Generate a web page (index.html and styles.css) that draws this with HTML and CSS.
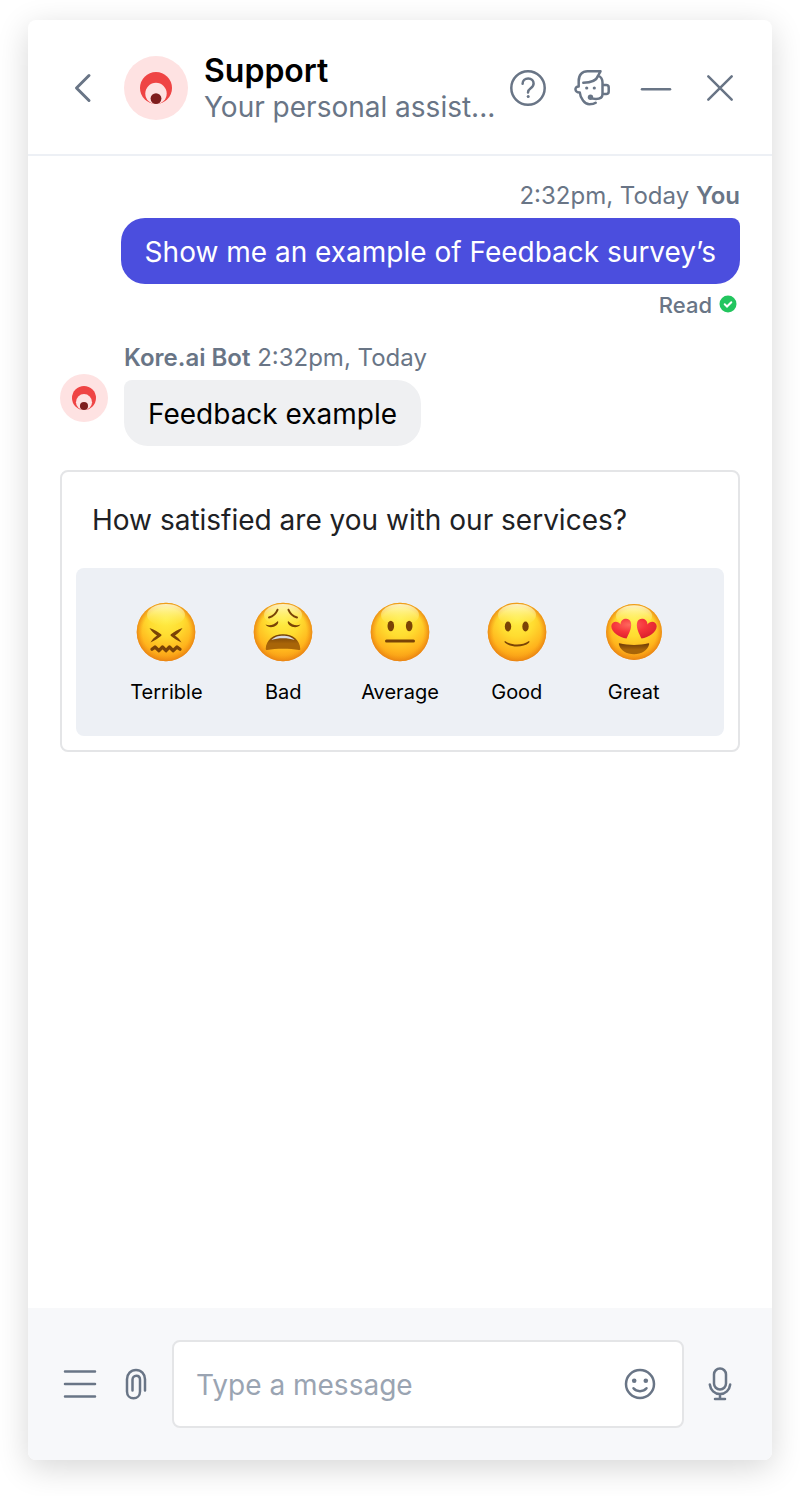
FILE: index.html
```html
<!DOCTYPE html>
<html lang="en">
<head>
<meta charset="utf-8">
<meta name="viewport" content="width=device-width, initial-scale=1">
<title>Support chat</title>
<link rel="stylesheet" href="styles.css">
</head>
<body>
<svg class="defs" width="0" height="0" aria-hidden="true">
  <defs>
    <radialGradient id="face" cx="50%" cy="28%" r="74%">
      <stop offset="0" stop-color="#ffee45"/>
      <stop offset=".4" stop-color="#ffdc30"/>
      <stop offset=".75" stop-color="#ffb31c"/>
      <stop offset="1" stop-color="#f38f12"/>
    </radialGradient>
    <radialGradient id="rim" cx="50%" cy="50%" r="50%">
      <stop offset=".8" stop-color="#f59a12" stop-opacity="0"/>
      <stop offset="1" stop-color="#e67f14" stop-opacity=".8"/>
    </radialGradient>
    <linearGradient id="shine" x1="0" y1="0" x2="0" y2="1">
      <stop offset="0" stop-color="#fffde0" stop-opacity=".85"/>
      <stop offset="1" stop-color="#fff36a" stop-opacity="0"/>
    </linearGradient>
    <linearGradient id="mouth" x1="0" y1="0" x2="0" y2="1">
      <stop offset="0" stop-color="#6b3a08"/>
      <stop offset=".6" stop-color="#a86508"/>
      <stop offset="1" stop-color="#a86508"/>
    </linearGradient>
    <radialGradient id="heart" cx="40%" cy="30%" r="75%">
      <stop offset="0" stop-color="#ff6a5e"/>
      <stop offset=".5" stop-color="#f5333a"/>
      <stop offset="1" stop-color="#d81e2c"/>
    </radialGradient>
    <symbol id="head" viewBox="0 0 64 64">
      <circle cx="32" cy="32" r="29.3" fill="url(#face)"/>
      <circle cx="32" cy="32" r="29.3" fill="url(#rim)"/>
      <ellipse cx="32" cy="15" rx="19" ry="11" fill="url(#shine)"/>
    </symbol>
    <symbol id="logo" viewBox="0 0 64 64">
      <circle cx="32" cy="32" r="32" fill="#fee2e2"/>
      <circle cx="32" cy="32" r="16" fill="#ef4444"/>
      <circle cx="32" cy="37.5" r="10.7" fill="#fee2e2"/>
      <circle cx="32" cy="42.6" r="5.4" fill="#7f1d1d"/>
    </symbol>
  </defs>
</svg>

<main class="chat">
  <header class="chat-header">
    <button class="icon-button back" type="button" aria-label="Back">
      <svg width="48" height="40" viewBox="0 0 48 40"><path d="M29 7.500 16.500 20 29 32.500"/></svg>
    </button>
    <svg class="avatar" aria-hidden="true"><use href="#logo"/></svg>
    <div class="heading">
      <h1>Support</h1>
      <p>Your personal assist...</p>
    </div>
    <div class="header-actions">
      <button class="icon-button" type="button" aria-label="Help">
        <svg width="40" height="40" viewBox="0 0 40 40"><circle cx="20" cy="20" r="16.700"/><path d="M14.600 15.800c0-3.100 2.400-5.300 5.600-5.300s5.400 2.100 5.400 5c0 2.300-1.200 3.500-2.900 4.700-1.900 1.300-2.700 2.100-2.700 4.400"/><circle class="solid" cx="20.200" cy="28.600" r="1.500"/></svg>
      </button>
      <button class="icon-button" type="button" aria-label="Talk to an agent">
        <svg width="40" height="40" viewBox="-2 -2 40 40"><path d="M4.700 16.500V11C4.700 4.800 8 1.300 13.500 1.300h13l-2.300 4.200c3 1.500 4.300 4 4.300 7V24c0 3.500-3 5-6.500 5-2.600 0-4.300-.5-5.500-1.500M9.300 12.700c7 0 13.200-2.200 14.900-7.200M4.700 16.500C.2 16.500.2 22.500 5.800 22.500c.4 5.500 5 11.800 9.500 11.800 2.700 0 4.700-.2 6.400-1.500M28.700 15h3.500c1.700 0 2.500.8 2.500 2.500v4c0 1.700-.8 2.500-2.500 2.500h-3.500"/><circle class="solid" cx="12.700" cy="18" r="1.600"/><circle class="solid" cx="20.300" cy="18" r="1.600"/><circle class="solid" cx="16.500" cy="27.200" r="2.700"/></svg>
      </button>
      <button class="icon-button" type="button" aria-label="Minimize">
        <svg width="40" height="40" viewBox="0 0 40 40"><path d="M6 21.200h28"/></svg>
      </button>
      <button class="icon-button" type="button" aria-label="Close">
        <svg width="40" height="40" viewBox="0 0 40 40"><path d="m8.300 8.300 23.400 23.400m0-23.400L8.300 31.700"/></svg>
      </button>
    </div>
  </header>

  <section class="messages">
    <article class="message sent">
      <p class="meta">2:32pm, Today <strong>You</strong></p>
      <p class="bubble">Show me an example of Feedback survey’s</p>
      <p class="status">Read
        <svg width="24" height="24" viewBox="0 0 24 24" aria-hidden="true"><circle cx="12" cy="11" r="8.500"/><path d="m8.700 11.300 2.300 2.200 4.300-4.300"/></svg>
      </p>
    </article>

    <article class="message received">
      <svg class="avatar small" aria-hidden="true"><use href="#logo"/></svg>
      <div class="message-body">
        <p class="meta"><strong>Kore.ai Bot</strong> 2:32pm, Today</p>
        <p class="bubble">Feedback example</p>
      </div>
    </article>

    <section class="survey" aria-labelledby="question">
      <h2 id="question">How satisfied are you with our services?</h2>
      <div class="ratings">
        <button class="rating" type="button">
          <svg class="emoji" viewBox="0 0 64 64" aria-hidden="true"><use href="#head"/><g class="feature"><path class="fill" d="M15.500 28c4.500 1.500 8.500 4 11.500 6.300.7.500.7 1.200 0 1.700-3 2.200-6.500 4.700-10.500 6.500 1.600-3 3.900-5.300 6.500-7-2.900-1.700-5.700-4.200-7.500-7.500zM48.500 28c-4.500 1.500-8.500 4-11.500 6.300-.7.500-.7 1.200 0 1.700 3 2.200 6.500 4.700 10.500 6.500-1.600-3-3.900-5.300-6.500-7 2.900-1.700 5.700-4.200 7.500-7.500z"/><path d="m18 49.300 3-2.300 4 3.700 3.500-3.700 3.500 3.700 3.500-3.700 3.500 3.700 4-3.700 3 2.300" stroke-width="3.300"/></g></svg>
          <span>Terrible</span>
        </button>
        <button class="rating" type="button">
          <svg class="emoji" viewBox="0 0 64 64" aria-hidden="true"><use href="#head"/><g class="feature"><path d="M18 17.500c4-1.300 7-4 8.500-7.700M46 17.500c-4-1.300-7-4-8.500-7.700" stroke-width="2"/><path class="fill" d="M14.500 24.500c4 1.700 8.500.5 12.500-3.500 2 4.500-8.500 9.500-12.500 3.500zM49.500 24.500c-4 1.700-8.500.5-12.500-3.500-2 4.500 8.500 9.500 12.500 3.500z"/></g><path fill="url(#mouth)" d="M14.700 49C15 40 22 34.200 32 34.200S49 40 49.300 49c0 .8-.7 1.100-1.400.9-9-1.700-22.800-1.700-31.800 0-.8.200-1.400-.1-1.400-.9z"/><path fill="#d9d9df" d="M20.500 40c4.500-5.800 18.500-5.800 23 0-6-2.200-17-2.200-23 0z"/></svg>
          <span>Bad</span>
        </button>
        <button class="rating" type="button">
          <svg class="emoji" viewBox="0 0 64 64" aria-hidden="true"><use href="#head"/><g class="feature"><ellipse class="fill" cx="22.800" cy="26" rx="3.300" ry="5.200"/><ellipse class="fill" cx="41.200" cy="26" rx="3.300" ry="5.200"/><path d="M18.500 41h27" stroke-width="3"/></g></svg>
          <span>Average</span>
        </button>
        <button class="rating" type="button">
          <svg class="emoji" viewBox="0 0 64 64" aria-hidden="true"><use href="#head"/><g class="feature"><ellipse class="fill" cx="23" cy="26.500" rx="3.200" ry="5"/><ellipse class="fill" cx="40.500" cy="26.500" rx="3.200" ry="5"/><path class="fill" d="M20 41c6.500 4.700 17.500 4.700 24 0 .8.500.4 1.200 0 1.700-5.500 5-18.500 5-24 0-.4-.5-.8-1.200 0-1.700z"/></g></svg>
          <span>Good</span>
        </button>
        <button class="rating" type="button">
          <svg class="emoji" viewBox="0 0 64 64" aria-hidden="true"><use href="#head" x="1.500" y="1.500" width="61" height="61"/><path fill="url(#heart)" d="M24.500 38.600C17.500 37.300 9.300 32.500 9.300 26.300c0-5.300 6.700-6.300 9.200-1.800 0-6.800 9.300-7.800 10.500-1.500 1 5.300-2.500 11.300-4.500 15.600zM39.500 38.600c7-1.300 15.200-6.100 15.200-12.300 0-5.300-6.700-6.300-9.200-1.800 0-6.800-9.300-7.800-10.500-1.500-1 5.300 2.500 11.300 4.500 15.600z"/><path fill="url(#mouth)" d="M17.500 43.200c9 2.300 20 2.300 29 0 .5-.1.800.2.700.8-1.200 6.500-7.700 10.200-15.200 10.200S18 50.500 16.800 44c-.1-.6.200-.9.700-.8z"/></svg>
          <span>Great</span>
        </button>
      </div>
    </section>
  </section>

  <form class="composer">
    <button class="icon-button" type="button" aria-label="Menu">
      <svg width="40" height="40" viewBox="0 0 40 40"><path d="M5 7.500h30M5 20h30M5 32.500h30"/></svg>
    </button>
    <button class="icon-button" type="button" aria-label="Attach a file">
      <svg width="40" height="40" viewBox="0 0 40 40"><path d="M29 26.500V15.300C29 10 25.200 6 20 6s-9 4-9 9.300v12.200c0 4 2.800 6.800 6.500 6.800s6.500-2.800 6.500-6.800V15.800c0-2.300-1.500-4-3.700-4s-3.800 1.700-3.800 4v10.700"/></svg>
    </button>
    <div class="field">
      <input type="text" placeholder="Type a message" aria-label="Message">
      <button class="icon-button" type="button" aria-label="Insert emoji">
        <svg width="40" height="40" viewBox="0 0 40 40"><circle cx="20" cy="20" r="14"/><path d="M13.500 24.300c3 3.800 10 3.800 13 0"/><circle class="solid" cx="14.200" cy="16.700" r="2.300"/><circle class="solid" cx="25.800" cy="16.700" r="2.300"/></svg>
      </button>
    </div>
    <button class="icon-button" type="button" aria-label="Record voice">
      <svg width="40" height="40" viewBox="0 0 40 40"><rect x="14" y="4.500" width="12" height="21" rx="6"/><path d="M9.800 20.500C10.500 26 14.500 30 20 30s9.500-4 10.200-9.500M20 30v5M15 35h10"/></svg>
    </button>
  </form>
</main>
</body>
</html>
```
FILE: styles.css
```css
* {
  box-sizing: border-box;
}

body {
  margin: 0;
  padding: 20px 28px 36px;
  min-height: 100vh;
  display: flex;
  background: #fff;
  color: #000;
  font-family: Inter, "Liberation Sans", sans-serif;
}

h1,
h2,
p {
  margin: 0;
}

button,
input {
  font: inherit;
  color: inherit;
}

.defs {
  position: absolute;
}

.chat {
  flex: 1;
  min-width: 0;
  display: flex;
  flex-direction: column;
  background: #fff;
  border-radius: 8px;
  overflow: hidden;
  box-shadow: 0 8px 32px rgba(0, 0, 0, 0.16);
}

.chat-header {
  display: flex;
  align-items: center;
  gap: 16px;
  padding: 32px 32px 30px;
  border-bottom: 2px solid #edf0f5;
}

.icon-button {
  flex: none;
  display: flex;
  width: 40px;
  height: 40px;
  padding: 0;
  border: 0;
  background: none;
  cursor: pointer;
}

.icon-button svg {
  fill: none;
  stroke: #697586;
  stroke-width: 2.5;
  stroke-linecap: round;
  stroke-linejoin: round;
}

.icon-button .solid {
  fill: #697586;
  stroke: none;
}

.back {
  width: 48px;
}

.back svg {
  stroke-width: 3;
}

.avatar {
  flex: none;
  width: 64px;
  height: 64px;
}

.heading {
  flex: 1;
  min-width: 0;
  white-space: nowrap;
}

.heading h1 {
  font-size: 32px;
  font-weight: 600;
  line-height: 38px;
}

.heading p {
  font-size: 28px;
  line-height: 34px;
  color: #697586;
}

.header-actions {
  display: flex;
  gap: 24px;
}

.messages {
  flex: 1;
  display: flex;
  flex-direction: column;
  gap: 24px;
  padding: 24px 32px;
}

.message {
  display: flex;
}

.sent {
  flex-direction: column;
  align-items: flex-end;
}

.received {
  align-items: flex-start;
  gap: 16px;
}

.message-body {
  display: flex;
  flex-direction: column;
  align-items: flex-start;
}

.avatar.small {
  width: 48px;
  height: 48px;
  margin-top: 32px;
}

.meta {
  margin-bottom: 6px;
  font-size: 24px;
  line-height: 32px;
  color: #697586;
}

.meta strong {
  font-weight: 600;
}

.bubble {
  padding: 17px 24px 15px;
  border-radius: 24px;
  font-size: 28px;
  line-height: 34px;
}

.sent .bubble {
  border-top-right-radius: 8px;
  background: #4b4ede;
  color: #fff;
}

.received .bubble {
  border-top-left-radius: 8px;
  background: #eff0f2;
}

.status {
  display: flex;
  align-items: center;
  gap: 4px;
  margin-top: 8px;
  font-size: 22px;
  font-weight: 500;
  line-height: 26px;
  color: #697586;
}

.status circle {
  fill: #22c55e;
}

.status path {
  fill: none;
  stroke: #fff;
  stroke-width: 2;
  stroke-linecap: round;
}

.survey {
  padding: 0 14px 14px;
  border: 2px solid #e4e5e7;
  border-radius: 8px;
}

.survey h2 {
  padding: 30px 16px;
  font-size: 28px;
  font-weight: 400;
  line-height: 36px;
  color: #202124;
}

.ratings {
  display: grid;
  grid-template-columns: repeat(5, 1fr);
  padding: 32px;
  border-radius: 8px;
  background: #edf0f5;
}

.rating {
  display: flex;
  flex-direction: column;
  align-items: center;
  gap: 16px;
  padding: 0;
  border: 0;
  background: none;
  font-size: 20px;
  line-height: 24px;
  cursor: pointer;
}

.emoji {
  width: 64px;
  height: 64px;
}

.feature {
  fill: none;
  stroke: #7a4306;
  stroke-linecap: round;
  stroke-linejoin: round;
}

.feature .fill {
  fill: #7a4306;
  stroke: none;
}

.composer {
  display: flex;
  align-items: center;
  gap: 16px;
  padding: 32px;
  background: #f7f8fa;
}

.field {
  flex: 1;
  min-width: 0;
  height: 88px;
  display: flex;
  align-items: center;
  padding: 0 22px;
  border: 2px solid #e4e5e7;
  border-radius: 8px;
  background: #fff;
}

.field input {
  flex: 1;
  min-width: 0;
  padding: 2px 0 0;
  border: 0;
  outline: 0;
  background: none;
  font-size: 28px;
  line-height: 36px;
}

.field input::placeholder {
  color: #9aa4b2;
  opacity: 1;
}
```
